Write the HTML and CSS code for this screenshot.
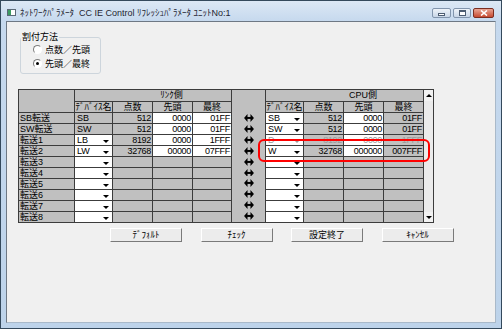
FILE: index.html
```html
<!DOCTYPE html>
<html lang="ja">
<head>
  <meta charset="UTF-8">
  <title>ﾈｯﾄﾜｰｸﾊﾟﾗﾒｰﾀ CC IE Control ﾘﾌﾚｯｼｭﾊﾟﾗﾒｰﾀ</title>
  <link rel="stylesheet" href="styles.css">
</head>
<body>
  <div class="window">
    <div class="titlebar">
      <span class="app-icon"></span>
      <span class="title">ﾈｯﾄﾜｰｸﾊﾟﾗﾒｰﾀ&nbsp; CC IE Control ﾘﾌﾚｯｼｭﾊﾟﾗﾒｰﾀ ﾕﾆｯﾄNo:1</span>
      <div class="caption-btns">
        <span class="cap min"><i></i></span>
        <span class="cap max"><i></i></span>
        <span class="cap close">
          <svg width="8" height="6" viewBox="0 0 8 6"><path d="M1 0.5 L7 5.5 M7 0.5 L1 5.5" stroke="#fff" stroke-width="1.6"/></svg>
        </span>
      </div>
    </div>

    <div class="client">
      <!-- Assignment method -->
      <fieldset class="group">
        <legend>割付方法</legend>
        <label class="radio"><span class="dot"></span>点数／先頭</label>
        <label class="radio"><span class="dot on"></span>先頭／最終</label>
      </fieldset>

      <!-- Refresh parameter grid -->
      <div class="grid-wrap">
        <div class="grid">
          <div class="c corner"></div>
          <div class="c h group-h">ﾘﾝｸ側</div>
          <div class="arrows">
            <svg width="10" height="8" viewBox="0 0 10 8"><path d="M0 4 L3.5 0 V8 Z M10 4 L6.5 0 V8 Z"/><rect x="3" y="3" width="4" height="2"/></svg>
            <svg width="10" height="8" viewBox="0 0 10 8"><path d="M0 4 L3.5 0 V8 Z M10 4 L6.5 0 V8 Z"/><rect x="3" y="3" width="4" height="2"/></svg>
            <svg width="10" height="8" viewBox="0 0 10 8"><path d="M0 4 L3.5 0 V8 Z M10 4 L6.5 0 V8 Z"/><rect x="3" y="3" width="4" height="2"/></svg>
            <svg width="10" height="8" viewBox="0 0 10 8"><path d="M0 4 L3.5 0 V8 Z M10 4 L6.5 0 V8 Z"/><rect x="3" y="3" width="4" height="2"/></svg>
            <svg width="10" height="8" viewBox="0 0 10 8"><path d="M0 4 L3.5 0 V8 Z M10 4 L6.5 0 V8 Z"/><rect x="3" y="3" width="4" height="2"/></svg>
            <svg width="10" height="8" viewBox="0 0 10 8"><path d="M0 4 L3.5 0 V8 Z M10 4 L6.5 0 V8 Z"/><rect x="3" y="3" width="4" height="2"/></svg>
            <svg width="10" height="8" viewBox="0 0 10 8"><path d="M0 4 L3.5 0 V8 Z M10 4 L6.5 0 V8 Z"/><rect x="3" y="3" width="4" height="2"/></svg>
            <svg width="10" height="8" viewBox="0 0 10 8"><path d="M0 4 L3.5 0 V8 Z M10 4 L6.5 0 V8 Z"/><rect x="3" y="3" width="4" height="2"/></svg>
            <svg width="10" height="8" viewBox="0 0 10 8"><path d="M0 4 L3.5 0 V8 Z M10 4 L6.5 0 V8 Z"/><rect x="3" y="3" width="4" height="2"/></svg>
            <svg width="10" height="8" viewBox="0 0 10 8"><path d="M0 4 L3.5 0 V8 Z M10 4 L6.5 0 V8 Z"/><rect x="3" y="3" width="4" height="2"/></svg>
          </div>
          <div class="c h group-h">CPU側</div>
          <div class="scroll">
            <div class="scroll-btn up"><i></i></div>
            <div class="scroll-btn down"><i></i></div>
          </div>

          <div class="c h">ﾃﾞﾊﾞｲｽ名</div>
          <div class="c h">点数</div>
          <div class="c h">先頭</div>
          <div class="c h">最終</div>
          <div class="c h">ﾃﾞﾊﾞｲｽ名</div>
          <div class="c h">点数</div>
          <div class="c h">先頭</div>
          <div class="c h">最終</div>

          <div class="c lbl">SB転送</div>
          <div class="c txt">SB</div>
          <div class="c num">512</div>
          <div class="c num w">0000</div>
          <div class="c num w">01FF</div>
          <div class="c sel">SB</div>
          <div class="c num">512</div>
          <div class="c num w">0000</div>
          <div class="c num">01FF</div>

          <div class="c lbl">SW転送</div>
          <div class="c txt">SW</div>
          <div class="c num">512</div>
          <div class="c num w">0000</div>
          <div class="c num w">01FF</div>
          <div class="c sel">SW</div>
          <div class="c num">512</div>
          <div class="c num w">0000</div>
          <div class="c num">01FF</div>

          <div class="c lbl">転送1</div>
          <div class="c sel">LB</div>
          <div class="c num">8192</div>
          <div class="c num w">0000</div>
          <div class="c num w">1FFF</div>
          <div class="c sel faint">D</div>
          <div class="c num faint">8192</div>
          <div class="c num w faint">0000</div>
          <div class="c num faint">1FFF</div>

          <div class="c lbl">転送2</div>
          <div class="c sel">LW</div>
          <div class="c num">32768</div>
          <div class="c num w">00000</div>
          <div class="c num w">07FFF</div>
          <div class="c sel">W</div>
          <div class="c num">32768</div>
          <div class="c num w">000000</div>
          <div class="c num">007FFF</div>

          <div class="c lbl">転送3</div>
          <div class="c sel"></div><div class="c"></div><div class="c"></div><div class="c"></div>
          <div class="c sel"></div><div class="c"></div><div class="c"></div><div class="c"></div>

          <div class="c lbl">転送4</div>
          <div class="c sel"></div><div class="c"></div><div class="c"></div><div class="c"></div>
          <div class="c sel"></div><div class="c"></div><div class="c"></div><div class="c"></div>

          <div class="c lbl">転送5</div>
          <div class="c sel"></div><div class="c"></div><div class="c"></div><div class="c"></div>
          <div class="c sel"></div><div class="c"></div><div class="c"></div><div class="c"></div>

          <div class="c lbl">転送6</div>
          <div class="c sel"></div><div class="c"></div><div class="c"></div><div class="c"></div>
          <div class="c sel"></div><div class="c"></div><div class="c"></div><div class="c"></div>

          <div class="c lbl">転送7</div>
          <div class="c sel"></div><div class="c"></div><div class="c"></div><div class="c"></div>
          <div class="c sel"></div><div class="c"></div><div class="c"></div><div class="c"></div>

          <div class="c lbl">転送8</div>
          <div class="c sel"></div><div class="c"></div><div class="c"></div><div class="c"></div>
          <div class="c sel"></div><div class="c"></div><div class="c"></div><div class="c"></div>
        </div>
        <div class="highlight"></div>
      </div>

      <div class="buttons">
        <button class="btn">ﾃﾞﾌｫﾙﾄ</button>
        <button class="btn">ﾁｪｯｸ</button>
        <button class="btn">設定終了</button>
        <button class="btn">ｷｬﾝｾﾙ</button>
      </div>
    </div>
  </div>
</body>
</html>
```

FILE: styles.css
```css
/* Reset */
* {
  margin: 0;
  padding: 0;
  box-sizing: border-box;
}
body {
  width: 502px;
  height: 329px;
  overflow: hidden;
  font-family: "Liberation Sans", "Noto Sans CJK JP", sans-serif;
  font-size: 9px;
  color: #000;
}

/* Window frame */
.window {
  width: 502px;
  height: 329px;
  border: 1px solid #34495c;
  background: linear-gradient(to bottom, #dce8f5 0, #c6d9ee 20px, #bdd3ea 100%);
  padding: 0 5px 5px;
  display: flex;
  flex-direction: column;
}
.titlebar {
  height: 20px;
  margin: 0 -5px;
  padding: 3px 0 0 6px;
  display: flex;
  align-items: center;
}
.app-icon {
  width: 9px;
  height: 7px;
  border: 1px solid #5c6a78;
  background: linear-gradient(to right, #3d9b62 0 3px, #fff 3px);
  margin-right: 4px;
}
.title {
  color: #1e2430;
  white-space: nowrap;
}
.caption-btns {
  margin-left: auto;
  margin-right: 7px;
  align-self: flex-start;
  margin-top: 4px;
  display: flex;
  gap: 2px;
}
.cap {
  height: 10px;
  border: 1px solid #8295ad;
  border-radius: 2px;
  background: linear-gradient(to bottom, #eef3f9, #c8d6e7);
  display: flex;
  align-items: center;
  justify-content: center;
}
.cap.min { width: 19px; }
.cap.max { width: 18px; }
.cap.close {
  width: 21px;
  border-color: #7b2d20;
  background: linear-gradient(to bottom, #e9a594, #c64a31);
}
.cap.min i {
  width: 7px;
  height: 3px;
  margin-top: 3px;
  background: #fff;
  border: 1px solid #4d5d72;
}
.cap.max i {
  width: 7px;
  height: 6px;
  border: 1px solid #4d5d72;
  border-top-width: 2px;
  background: #fff;
}
.cap.close svg { display: block; }

/* Client area */
.client {
  flex: 1;
  background: #f0f0f0;
  border: 1px solid;
  border-color: #6e7884 #a9b9c9 #a9b9c9 #6e7884;
}

/* Group box */
.group {
  width: 81px;
  margin: 9px 0 0 13px;
  padding: 0 0 4px 0;
  border: 1px solid #cdd5dc;
  border-radius: 3px;
}
.group legend {
  padding: 0 1px;
  line-height: 12px;
}
.radio {
  display: flex;
  align-items: center;
  height: 12px;
  margin-left: 12px;
  white-space: nowrap;
}
.radio + .radio { margin-top: 2px; }
.dot {
  width: 9px;
  height: 9px;
  margin-right: 3px;
  border-radius: 50%;
  border: 1px solid;
  border-color: #7d7d7d #fff #fff #7d7d7d;
  background: #fff;
  display: flex;
  align-items: center;
  justify-content: center;
}
.dot.on::after {
  content: "";
  width: 3px;
  height: 3px;
  border-radius: 50%;
  background: #000;
}

/* Parameter grid */
.grid-wrap {
  position: relative;
  width: max-content;
  margin: 15px 0 0 11px;
}
.grid {
  display: grid;
  grid-template-columns: 55px 37px 39px 39px 38px 33px 37px 39px 39px 39px 9px;
  grid-template-rows: 11px 10px repeat(10, 10px);
  gap: 1px;
  background: #3c3c3c;
  border: 1px solid #3c3c3c;
}
.c {
  background: #c0c0c0;
  line-height: 10px;
  white-space: nowrap;
  overflow: hidden;
}
.c.w { background: #fff; }
.corner { grid-row: span 2; }
.group-h {
  grid-column: span 4;
  line-height: 11px;
  padding-left: 37px;
}
.h { text-align: center; }
.lbl { padding-left: 1px; }
.txt { padding-left: 2px; }
.num {
  text-align: right;
  padding-right: 1px;
  letter-spacing: -0.3px;
}
.sel {
  background: #fff;
  display: flex;
  align-items: center;
  padding: 0 3px 0 2px;
}
.sel::after {
  content: "";
  margin-left: auto;
  margin-top: 2px;
  border-top: 3px solid #000;
  border-left: 3px solid transparent;
  border-right: 3px solid transparent;
}
.faint { color: #9a9a9a; }
.sel.faint::after { border-top-color: #9a9a9a; }

.arrows {
  grid-column: 6;
  grid-row: 1 / -1;
  background: #c0c0c0;
  padding-top: 23px;
  display: flex;
  flex-direction: column;
  align-items: center;
}
.arrows svg {
  display: block;
  margin: 1px 0 2px;
}

.scroll {
  grid-column: 11;
  grid-row: 1 / -1;
  background: #ebebeb;
  display: flex;
  flex-direction: column;
  justify-content: space-between;
}
.scroll-btn {
  height: 11px;
  background: #f2f2f2;
  display: flex;
  align-items: center;
  justify-content: center;
}
.scroll-btn.down { height: 10px; }
.scroll-btn.up i {
  border-bottom: 3px solid #000;
  border-left: 3px solid transparent;
  border-right: 3px solid transparent;
}
.scroll-btn.down i {
  border-top: 3px solid #000;
  border-left: 3px solid transparent;
  border-right: 3px solid transparent;
}

/* Red annotation box */
.highlight {
  position: absolute;
  left: 240px;
  top: 50px;
  width: 172px;
  height: 23px;
  border: 2px solid #f00;
  border-radius: 6px;
}

/* Buttons */
.buttons {
  display: flex;
  gap: 18.5px;
  margin: 5px 0 0 103px;
}
.btn {
  width: 72px;
  height: 14px;
  font-family: inherit;
  font-size: 9px;
  line-height: 12px;
  color: #000;
  background: #ececec;
  border: 1px solid;
  border-color: #fff #7a7a7a #7a7a7a #fff;
}
```
